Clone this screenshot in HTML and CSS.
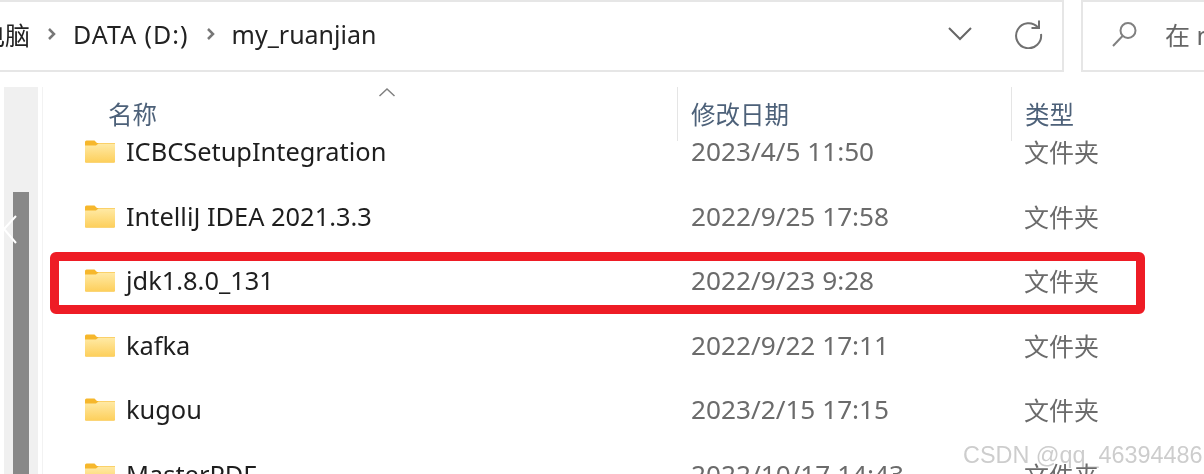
FILE: index.html
```html
<!DOCTYPE html>
<html lang="zh">
<head>
  <meta charset="UTF-8">
  <title>my_ruanjian</title>
  <link rel="stylesheet" href="styles.css">
</head>
<body>
  <svg class="icon-defs" width="0" height="0">
    <defs>
      <linearGradient id="folder-fill" x1="0" y1="0" x2="0" y2="1">
        <stop offset="0" stop-color="#ffeaa6"/>
        <stop offset="1" stop-color="#fdcf5b"/>
      </linearGradient>
      <symbol id="folder" viewBox="0 0 30 24">
        <path d="M0 3a1.500 1.500 0 0 1 1.500-1.500h8L12 4h18v18.500a1 1 0 0 1-1 1H1a1 1 0 0 1-1-1z" fill="#f6b72c"/>
        <path d="M0 6.500h11L13.500 4.500H30v18a1 1 0 0 1-1 1H1a1 1 0 0 1-1-1z" fill="url(#folder-fill)"/>
      </symbol>
    </defs>
  </svg>

  <div class="window">
    <div class="top-bar">
      <div class="address-box">
        <span class="crumb crumb-first">电脑</span>
        <svg class="crumb-sep" width="10" height="14" viewBox="0 0 10 14"><path d="M2 2l5 5-5 5" /></svg>
        <span class="crumb crumb-drive">DATA (D:)</span>
        <svg class="crumb-sep" width="10" height="14" viewBox="0 0 10 14"><path d="M2 2l5 5-5 5" /></svg>
        <span class="crumb">my_ruanjian</span>
        <svg class="address-chevron" width="26" height="16" viewBox="0 0 26 16"><path d="M2 2l11 11L24 2" /></svg>
        <svg class="address-refresh" width="30" height="30" viewBox="0 0 30 30">
          <path d="M24 8.500A12.500 12.500 0 1 0 27 15" />
          <path d="M25 1.500v7.500h-7.500" />
        </svg>
      </div>
      <div class="search-box">
        <svg class="search-icon" width="28" height="28" viewBox="0 0 28 28">
          <circle cx="17" cy="10.500" r="7.500" />
          <path d="M11.500 16L2 26" />
        </svg>
        <span class="search-text">在 my_ruanjian 中搜索</span>
      </div>
    </div>

    <div class="content">
      <div class="side-strip">
        <div class="scroll-thumb"></div>
        <svg class="side-arrow" width="16" height="32" viewBox="0 0 16 32"><path d="M14 2L2 15l12 14" /></svg>
      </div>
      <div class="file-list">
        <div class="list-header">
          <div class="head-cell head-name">名称</div>
          <div class="head-cell">修改日期</div>
          <div class="head-cell">类型</div>
          <svg class="sort-caret" width="18" height="10" viewBox="0 0 18 10"><path d="M1.500 9L9 2l7.500 7" /></svg>
        </div>

        <div class="file-row">
          <div class="file-name"><svg class="folder-icon"><use href="#folder"/></svg>ICBCSetupIntegration</div>
          <div class="file-date">2023/4/5 11:50</div>
          <div class="file-type">文件夹</div>
        </div>
        <div class="file-row">
          <div class="file-name"><svg class="folder-icon"><use href="#folder"/></svg>IntelliJ IDEA 2021.3.3</div>
          <div class="file-date">2022/9/25 17:58</div>
          <div class="file-type">文件夹</div>
        </div>
        <div class="file-row">
          <div class="file-name"><svg class="folder-icon"><use href="#folder"/></svg>jdk1.8.0_131</div>
          <div class="file-date">2022/9/23 9:28</div>
          <div class="file-type">文件夹</div>
        </div>
        <div class="file-row">
          <div class="file-name"><svg class="folder-icon"><use href="#folder"/></svg>kafka</div>
          <div class="file-date">2022/9/22 17:11</div>
          <div class="file-type">文件夹</div>
        </div>
        <div class="file-row">
          <div class="file-name"><svg class="folder-icon"><use href="#folder"/></svg>kugou</div>
          <div class="file-date">2023/2/15 17:15</div>
          <div class="file-type">文件夹</div>
        </div>
        <div class="file-row">
          <div class="file-name"><svg class="folder-icon"><use href="#folder"/></svg>MasterPDF</div>
          <div class="file-date">2022/10/17 14:43</div>
          <div class="file-type">文件夹</div>
        </div>
      </div>
    </div>

    <div class="red-mark"></div>
    <div class="watermark">CSDN @qq_46394486</div>
  </div>
</body>
</html>
```

FILE: styles.css
```css
html, body {
  margin: 0;
  height: 100%;
  overflow: hidden;
  background: #fff;
}

body {
  font-family: "Noto Sans", "Noto Sans CJK SC", sans-serif;
}

.icon-defs {
  position: absolute;
}

.window {
  position: relative;
  height: 474px;
  overflow: hidden;
  filter: blur(0.4px);
}

.top-bar {
  display: flex;
  gap: 17px;
  height: 72px;
}

.address-box {
  display: flex;
  align-items: center;
  width: 1066px;
  flex: none;
  margin-left: -2px;
  box-sizing: border-box;
  padding-bottom: 4px;
  border: 2px solid #e6e6e6;
  border-left: none;
}

.search-box {
  display: flex;
  align-items: center;
  flex: 1;
  min-width: 0;
  overflow: hidden;
  white-space: nowrap;
  box-sizing: border-box;
  padding: 0 0 4px 28px;
  border: 2px solid #e6e6e6;
  border-right: none;
}

.crumb {
  font-size: 25px;
  color: #222;
}

.crumb-first {
  margin-left: -18px;
}

.crumb-drive {
  letter-spacing: 1px;
}

.crumb-sep {
  margin: 0 16px 0 17px;
  fill: none;
  stroke: #777;
  stroke-width: 2.5;
}

.address-chevron {
  margin-left: auto;
  fill: none;
  stroke: #666;
  stroke-width: 2;
}

.address-refresh {
  margin: 0 18px 0 41px;
  fill: none;
  stroke: #707070;
  stroke-width: 2;
}

.search-icon {
  flex: none;
  fill: none;
  stroke: #808080;
  stroke-width: 2;
}

.search-text {
  margin-left: 26px;
  font-size: 25px;
  color: #666;
}

.content {
  display: flex;
  padding-top: 15px;
}

.side-strip {
  position: relative;
  width: 34px;
  height: 387px;
  margin-left: 4px;
  background: #f0f0f0;
}

.scroll-thumb {
  width: 16px;
  height: 282px;
  margin: 105px 0 0 9px;
  background: #888;
}

.side-arrow {
  position: absolute;
  left: -2px;
  top: 127px;
  fill: none;
  stroke: #fff;
  stroke-width: 2;
}

.file-list {
  flex: 1;
  min-width: 0;
  margin-left: 4px;
  border-left: 1px solid #f2f2f2;
}

.list-header,
.file-row {
  display: grid;
  grid-template-columns: 634px 334px 1fr;
}

.list-header {
  position: relative;
  z-index: 1;
  height: 54px;
  margin-bottom: -22px;
}

.head-cell {
  height: 54px;
  box-sizing: border-box;
  padding: 10px 0 0 13px;
  border-left: 1px solid #e5e5e5;
  font-size: 24.5px;
  line-height: 36px;
  color: #4d6179;
}

.head-name {
  padding-left: 65px;
  border-left: none;
}

.sort-caret {
  position: absolute;
  left: 335px;
  top: 0;
  fill: none;
  stroke: #808080;
  stroke-width: 1.500;
}

.file-row {
  height: 64.5px;
  align-items: center;
  white-space: nowrap;
}

.file-name {
  display: flex;
  align-items: center;
  gap: 11px;
  padding-left: 42px;
  font-size: 25.4px;
  color: #1e1e1e;
}

.folder-icon {
  flex: none;
  width: 30px;
  height: 24px;
}

.file-date {
  padding-left: 14px;
  font-size: 26.2px;
  color: #6b6b6b;
}

.file-type {
  padding-left: 13px;
  font-size: 25px;
  color: #6b6b6b;
}

.red-mark {
  position: absolute;
  left: 50px;
  top: 252px;
  width: 1095px;
  height: 62px;
  box-sizing: border-box;
  border: 9px solid #ee1c25;
  border-radius: 6px;
}

.watermark {
  position: absolute;
  left: 963px;
  top: 442px;
  font-family: "Liberation Sans", Arial, sans-serif;
  font-size: 23.4px;
  line-height: 26px;
  white-space: nowrap;
  color: rgba(130, 130, 130, 0.4);
}
```
